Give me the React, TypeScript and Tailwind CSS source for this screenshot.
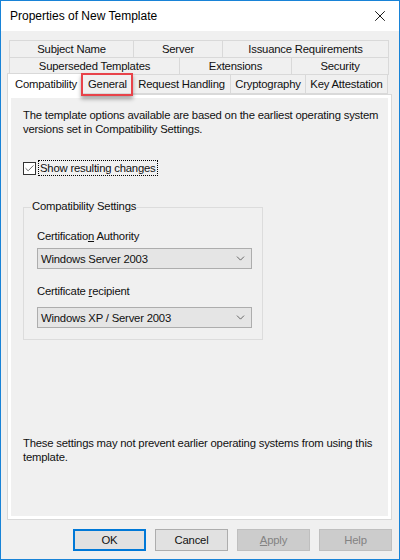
import { X, ChevronDown, Check } from "lucide-react";

const font = { fontFamily: '"Liberation Sans", Arial, sans-serif' };

function Tab({ label, w }: { label: string; w: string }) {
  return (
    <div
      className={`${w} -ml-px first:ml-0 flex items-center justify-center whitespace-nowrap border border-[#d9d9d9] bg-[#f0f0f0]`}
    >
      {label}
    </div>
  );
}

function Select({ value, top }: { value: string; top: string }) {
  return (
    <div
      className={`${top} flex h-[21px] w-[215px] items-center justify-between border border-[#adadad] bg-[#e5e5e5] pl-[3px] pr-[4px]`}
    >
      <span>{value}</span>
      <ChevronDown size={13} strokeWidth={1.3} className="text-[#333]" />
    </div>
  );
}

function Btn({ label, kind }: { label: string; kind?: "default" | "disabled" }) {
  const cls =
    kind === "default"
      ? "border-2 border-[#0078d7] bg-[#e1e1e1] text-[#111]"
      : kind === "disabled"
      ? "border border-[#bfbfbf] bg-[#cccccc] text-[#838383]"
      : "border border-[#adadad] bg-[#e1e1e1] text-[#111]";
  return (
    <div className={`flex h-[22px] w-[73px] items-center justify-center ${cls}`}>
      {label === "Apply" ? (
        <span>
          <span className="underline">A</span>pply
        </span>
      ) : (
        label
      )}
    </div>
  );
}

export default function App() {
  return (
    <div
      style={font}
      className="flex h-[560px] w-[400px] flex-col border border-[#1883d7] bg-[#f0f0f0] text-[11.3px] leading-[14px] tracking-[-0.2px] text-[#111]"
    >
      <div className="flex h-[30px] items-center justify-between bg-white pl-[9px] pr-[10px] text-[12px] tracking-normal text-black">
        <span>Properties of New Template</span>
        <X size={18} strokeWidth={1.2} />
      </div>

      <div className="flex flex-1 flex-col px-[6px] pt-[9px]">
        <div className="ml-[2px] flex h-[18px]">
          <Tab label="Subject Name" w="w-[125px]" />
          <Tab label="Server" w="w-[90px]" />
          <Tab label="Issuance Requirements" w="w-[167px]" />
        </div>
        <div className="-mt-px ml-[2px] flex h-[18px]">
          <Tab label="Superseded Templates" w="w-[171px]" />
          <Tab label="Extensions" w="w-[113px]" />
          <Tab label="Security" w="w-[98px]" />
        </div>
        <div className="relative z-10 -mt-px flex h-[20px] items-end whitespace-nowrap">
          <div className="-mb-px flex h-[22px] w-[76px] items-start border border-b-0 border-[#d9d9d9] bg-white pl-[7px] pt-[3px]">
            Compatibility
          </div>
          <div className="relative -ml-px flex h-[20px] w-[51px] items-center border border-[#d9d9d9] bg-[#f0f0f0] pl-[5px]">
            General
            <div className="absolute -left-[2px] -top-[2px] h-[23px] w-[52px] border-2 border-[#e8434a] shadow-[0_3px_4px_rgba(0,0,0,0.35)]" />
          </div>
          <div className="-ml-px flex h-[20px] w-[99px] items-center justify-center border border-[#d9d9d9] bg-[#f0f0f0]">
            Request Handling
          </div>
          <div className="-ml-px flex h-[20px] w-[76px] items-center justify-center border border-[#d9d9d9] bg-[#f0f0f0]">
            Cryptography
          </div>
          <div className="-ml-px flex h-[20px] w-[83px] items-center justify-center border border-[#d9d9d9] bg-[#f0f0f0]">
            Key Attestation
          </div>
        </div>

        <div className="h-[426px] w-[385px] border border-[#d9d9d9] bg-white p-[3px]">
          <div className="flex h-full flex-col bg-[#f0f0f0] pl-[12px] pt-[10px]">
            <p className="w-[362px]">
              The template options available are based on the earliest operating system versions set in
              Compatibility Settings.
            </p>

            <div className="mt-[24px] flex items-center gap-[2px]">
              <div className="flex h-[13px] w-[13px] items-center justify-center border border-[#333] bg-white">
                <Check size={11} strokeWidth={1.6} className="text-[#333]" />
              </div>
              <span className="border border-dotted border-black px-px leading-[14px]">
                Show resulting changes
              </span>
            </div>

            <div className="relative mt-[31px] h-[133px] w-[240px] border border-[#dcdcdc] pl-[13px] pt-[21px]">
              <span className="absolute -top-[9px] left-[7px] bg-[#f0f0f0] px-[1px]">
                Compatibility Settings
              </span>
              <div>
                Certificatio<span className="underline">n</span> Authority
              </div>
              <Select value="Windows Server 2003" top="mt-[5px]" />
              <div className="mt-[15px]">
                Certificate <span className="underline">r</span>ecipient
              </div>
              <Select value="Windows XP / Server 2003" top="mt-[9px]" />
            </div>

            <p className="mt-[96px] w-[362px]">
              These settings may not prevent earlier operating systems from using this template.
            </p>
          </div>
        </div>

        <div className="mt-[9px] flex justify-end gap-[9px] pr-[1px]">
          <Btn label="OK" kind="default" />
          <Btn label="Cancel" />
          <Btn label="Apply" kind="disabled" />
          <Btn label="Help" kind="disabled" />
        </div>
      </div>
    </div>
  );
}
